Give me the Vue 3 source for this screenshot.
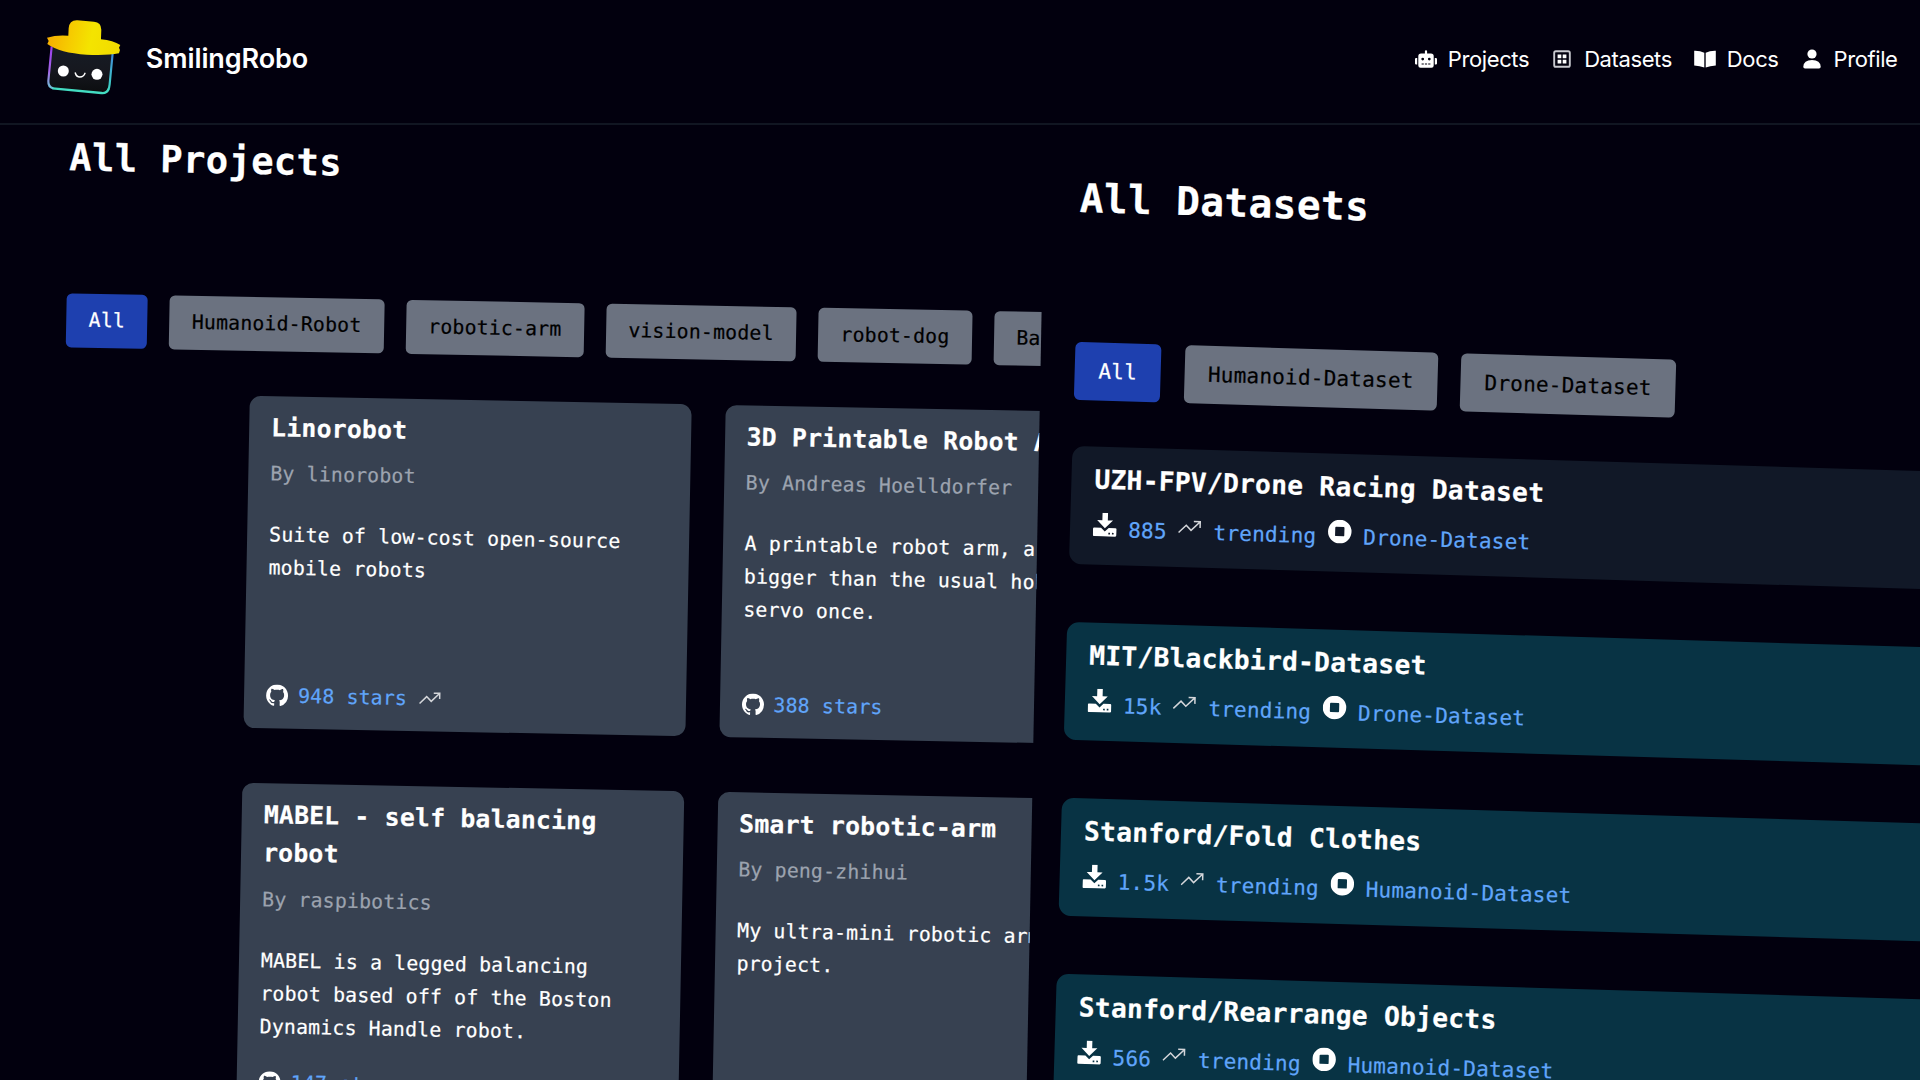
<script setup>
const nav = [
  { label: 'Projects', icon: 'robot' },
  { label: 'Datasets', icon: 'grid' },
  { label: 'Docs', icon: 'book' },
  { label: 'Profile', icon: 'person' },
]

const projectTags = ['All', 'Humanoid-Robot', 'robotic-arm', 'vision-model', 'robot-dog', 'Balancing-Robot']
const datasetTags = ['All', 'Humanoid-Dataset', 'Drone-Dataset']

const projects = [
  { title: 'Linorobot', author: 'linorobot', text: 'Suite of low-cost open-source mobile robots', stars: 948, trending: true },
  { title: '3D Printable Robot Arm', author: 'Andreas Hoelldorfer', text: 'A printable robot arm, a bit bigger than the usual hobby servo once.', stars: 388, trending: false },
  { title: 'MABEL - self balancing robot', author: 'raspibotics', text: 'MABEL is a legged balancing robot based off of the Boston Dynamics Handle robot.', stars: 147, trending: false },
  { title: 'Smart robotic-arm', author: 'peng-zhihui', text: 'My ultra-mini robotic arm project.', stars: 120, trending: false },
]

const datasets = [
  { name: 'UZH-FPV/Drone Racing Dataset', downloads: '885', tag: 'Drone-Dataset', tone: 'slate' },
  { name: 'MIT/Blackbird-Dataset', downloads: '15k', tag: 'Drone-Dataset', tone: 'teal' },
  { name: 'Stanford/Fold Clothes', downloads: '1.5k', tag: 'Humanoid-Dataset', tone: 'teal' },
  { name: 'Stanford/Rearrange Objects', downloads: '566', tag: 'Humanoid-Dataset', tone: 'teal' },
]
</script>

<template>
  <div class="page">
    <header class="header">
      <a class="brand">
        <svg class="logo" viewBox="138 56 226 230">
          <defs>
            <linearGradient id="side" x1="0" y1="0" x2="0" y2="1">
              <stop offset="0" stop-color="#3f86d8" />
              <stop offset="1" stop-color="#3fd8c4" />
            </linearGradient>
            <linearGradient id="left" x1="0" y1="0" x2="0" y2="1">
              <stop offset="0" stop-color="#9a3cf0" />
              <stop offset="0.6" stop-color="#a468e6" />
              <stop offset="1" stop-color="#6fc4d8" />
            </linearGradient>
            <linearGradient id="skin" x1="0" y1="0" x2="0" y2="1">
              <stop offset="0" stop-color="#161c26" />
              <stop offset="0.5" stop-color="#16181f" />
              <stop offset="1" stop-color="#0c0d0f" />
            </linearGradient>
            <linearGradient id="hat" x1="0" y1="0" x2="1" y2="0.1">
              <stop offset="0" stop-color="#f5a800" />
              <stop offset="0.35" stop-color="#f6ca00" />
              <stop offset="0.65" stop-color="#f4e400" />
              <stop offset="1" stop-color="#f2dc00" />
            </linearGradient>
          </defs>
          <path d="M154 138 145 242Q144 263 166 265L304 278Q325 280 328 258L339 158Z" fill="url(#skin)" />
          <path d="M155 138 145 242Q144 260 160 264" fill="none" stroke="url(#left)" stroke-width="6.5" />
          <path d="M158 264 304 278Q320 280 326 266" fill="none" stroke="#43dcc2" stroke-width="7" />
          <path d="M325 268Q328 262 329 252L338 160" fill="none" stroke="url(#side)" stroke-width="6.5" />
          <path d="M141 112Q170 103 205 106L206 84Q208 59 232 60L282 64Q304 66 304 88L303 117Q340 121 361 134L357 142 360 149 357 159Q320 166 260 163 180 158 142 131L146 122Z" fill="url(#hat)" />
          <circle cx="190" cy="212" r="16.5" fill="#fff" />
          <circle cx="291" cy="222" r="16.5" fill="#fff" />
          <path d="M226 218Q229 230 240 230 251 230 255 219" fill="none" stroke="#fff" stroke-width="4.5" stroke-linecap="round" />
        </svg>
        <span class="brand-name">SmilingRobo</span>
      </a>
      <nav class="nav">
        <a v-for="item in nav" :key="item.label" class="nav-link">
          <svg v-if="item.icon === 'robot'" class="nav-icon" viewBox="0 0 640 512">
            <path fill="currentColor" d="M32,224H64V416H32A32,32,0,0,1,0,384V256A32,32,0,0,1,32,224Zm512-48V448a64,64,0,0,1-64,64H160a64,64,0,0,1-64-64V176a80,80,0,0,1,80-80H288V32a32,32,0,0,1,64,0V96H464A80,80,0,0,1,544,176ZM264,256a40,40,0,1,0-40,40A40,40,0,0,0,264,256Zm-8,128H192v32h64Zm96,0H288v32h64ZM456,256a40,40,0,1,0-40,40A40,40,0,0,0,456,256Zm-8,128H384v32h64ZM640,256V384a32,32,0,0,1-32,32H576V224h32A32,32,0,0,1,640,256Z" />
          </svg>
          <svg v-else-if="item.icon === 'grid'" class="nav-icon" viewBox="0 0 22 22">
            <rect x="3.2" y="3.2" width="15.6" height="15.6" rx="1.6" fill="none" stroke="#c9c9cf" stroke-width="1.9" />
            <path fill="#fff" d="M6.6 6.4h3.7v3.9H6.6zM11.7 6.4h3.7v3.9h-3.7zM6.6 11.7h3.7v3.9H6.6zM11.7 11.7h3.7v3.9h-3.7z" />
          </svg>
          <svg v-else-if="item.icon === 'book'" class="nav-icon" viewBox="0 0 22 22">
            <path fill="currentColor" d="M.2 2.8Q6 2.6 10.3 4.7V19.6Q6 17.8.2 17.5ZM21.8 2.8Q16 2.6 11.7 4.7V19.6Q16 17.8 21.8 17.5Z" />
          </svg>
          <svg v-else class="nav-icon" viewBox="0 0 22 22">
            <circle cx="11" cy="6" r="4.6" fill="currentColor" />
            <path fill="currentColor" d="M2.3 18.8Q2.6 12.3 11 12.1 19.4 12.3 19.7 18.8 19.7 20.5 18 20.5H4Q2.3 20.5 2.3 18.8Z" />
          </svg>
          <span>{{ item.label }}</span>
        </a>
      </nav>
    </header>

    <main class="boards">
      <section class="board projects">
        <h1 class="heading">All Projects</h1>
        <div class="tags">
          <button v-for="(tag, i) in projectTags" :key="tag" class="tag" :class="{ active: i === 0 }">{{ tag }}</button>
        </div>
        <div class="cards">
          <article v-for="p in projects" :key="p.title" class="card">
            <h2 class="title">{{ p.title }}</h2>
            <p class="author">By {{ p.author }}</p>
            <p class="about">{{ p.text }}</p>
            <div class="stars">
              <svg class="github" viewBox="0 0 16 16">
                <path fill="currentColor" d="M8 0C3.58 0 0 3.58 0 8c0 3.54 2.29 6.53 5.47 7.59.4.07.55-.17.55-.38 0-.19-.01-.82-.01-1.49-2.01.37-2.53-.49-2.69-.94-.09-.23-.48-.94-.82-1.13-.28-.15-.68-.52-.01-.53.63-.01 1.08.58 1.23.82.72 1.21 1.87.87 2.33.66.07-.52.28-.87.51-1.07-1.78-.2-3.64-.89-3.64-3.95 0-.87.31-1.59.82-2.15-.08-.2-.36-1.02.08-2.12 0 0 .67-.21 2.2.82.64-.18 1.32-.27 2-.27s1.36.09 2 .27c1.53-1.04 2.2-.82 2.2-.82.44 1.1.16 1.92.08 2.12.51.56.82 1.27.82 2.15 0 3.07-1.87 3.75-3.65 3.95.29.25.54.73.54 1.48 0 1.07-.01 1.93-.01 2.2 0 .21.15.46.55.38A8.01 8.01 0 0 0 16 8c0-4.42-3.58-8-8-8Z" />
              </svg>
              <a class="link">{{ p.stars }} stars</a>
              <svg v-if="p.trending" class="trend" viewBox="0 0 22 22">
                <path fill="none" stroke="currentColor" stroke-width="1.5" d="M.6 16.3 7.6 9.3 12.2 14 20.4 5.9M14.6 5.7H20.6V11.5" />
              </svg>
            </div>
          </article>
        </div>
      </section>

      <section class="board datasets">
        <h1 class="heading">All Datasets</h1>
        <div class="tags">
          <button v-for="(tag, i) in datasetTags" :key="tag" class="tag" :class="{ active: i === 0 }">{{ tag }}</button>
        </div>
        <div class="rows">
          <article v-for="d in datasets" :key="d.name" class="row" :class="d.tone">
            <h2 class="title">{{ d.name }}</h2>
            <div class="meta">
              <svg class="icon" viewBox="0 0 24 24">
                <path fill="currentColor" d="M9.3 0h5.6v7.6h5.3L12.1 15.8 4 7.6h5.3Z" />
                <path fill="currentColor" fill-rule="evenodd" d="M1.2 15.3H8.2L12.1 19 16 15.3H22.8Q24 15.3 24 16.5V22.8Q24 24 22.8 24H1.2Q0 24 0 22.8V16.5Q0 15.3 1.2 15.3ZM15.8 20.2V21.9H17.5V20.2ZM19.5 20.2V21.9H21.2V20.2Z" />
              </svg>
              <a class="link">{{ d.downloads }}</a>
              <svg class="icon trend" viewBox="0 0 22 22">
                <path fill="none" stroke="currentColor" stroke-width="1.4" d="M.6 16.3 7.6 9.3 12.2 14 20.4 5.9M14.6 5.7H20.6V11.5" />
              </svg>
              <a class="link">trending</a>
              <svg class="icon stop" viewBox="0 0 24 24">
                <path fill="currentColor" fill-rule="evenodd" d="M12 0a12 12 0 1 1 0 24 12 12 0 0 1 0-24ZM8.2 7.3Q7.3 7.3 7.3 8.2V15.8Q7.3 16.7 8.2 16.7H15.8Q16.7 16.7 16.7 15.8V8.2Q16.7 7.3 15.8 7.3Z" />
              </svg>
              <a class="link">{{ d.tag }}</a>
            </div>
          </article>
        </div>
      </section>
    </main>
  </div>
</template>

<style>
body {
  margin: 0;
  background: #02000e;
}
</style>

<style scoped>
.page {
  width: 1920px;
  height: 1080px;
  overflow: hidden;
  background: #02000e;
  color: #fff;
  font-family: Inter, "Liberation Sans", sans-serif;
}

.header {
  box-sizing: border-box;
  height: 125px;
  padding: 0 22.5px 0 46px;
  border-bottom: 2px solid #111622;
  display: flex;
  justify-content: space-between;
  align-items: flex-start;
}

.brand {
  display: flex;
  align-items: center;
  gap: 24.5px;
  padding-top: 18.5px;
}

.logo {
  width: 75.3px;
  height: 76.7px;
}

.brand-name {
  font-size: 27px;
  font-weight: 600;
  line-height: 40px;
  letter-spacing: -0.1px;
  padding-top: 5px;
}

.nav {
  display: flex;
  gap: 22px;
  padding-top: 42.5px;
}

.nav-link {
  display: flex;
  align-items: center;
  gap: 11px;
  font-size: 22px;
  line-height: 33px;
  letter-spacing: -0.4px;
}

.nav-icon {
  width: 22px;
  height: 22px;
}

.boards {
  display: flex;
  height: 955px;
}

/* Sizes shared by both boards are multiples of the board's own unit, --u */
.board {
  flex: none;
  transform-origin: 0 0;
  font-family: "DejaVu Sans Mono", monospace;
  font-size: calc(14.45 * var(--u));
  line-height: calc(24 * var(--u));
  letter-spacing: 0.008em;
  -webkit-text-stroke: 0.2px currentColor;
}

.projects {
  --u: 1.375px;
  box-sizing: border-box;
  width: 1045px;
  height: 1060px;
  margin-top: -1px;
  padding-left: 70px;
  overflow: hidden;
  transform: rotate(1.1deg);
}

.datasets {
  --u: 1.46px;
  width: 1000px;
  height: 1060px;
  margin: -1px 0 0 37px;
  transform: rotate(1.7deg);
}

.heading {
  margin: 0;
  font-size: calc(27.1 * var(--u));
  line-height: calc(36 * var(--u));
  letter-spacing: 0.008em;
  font-weight: 700;
}

.projects .heading {
  padding: 8px 0 110px;
}

.datasets .heading {
  padding: 48px 0 117px;
}

.tags {
  display: flex;
  gap: calc(16 * var(--u));
}

.tag {
  flex: none;
  border: 0;
  border-radius: calc(4 * var(--u));
  padding: calc(7.7 * var(--u)) calc(16.3 * var(--u)) calc(8.3 * var(--u));
  background: #6b7280;
  color: #000;
  font: inherit;
  letter-spacing: inherit;
}

.tag.active {
  background: #1e40af;
  color: #fff;
}

.cards {
  display: grid;
  grid-template-columns: 442px 442px;
  grid-auto-rows: 332px;
  gap: 55px 33.5px;
  margin: 45px 0 0 185px;
}

.card {
  box-sizing: border-box;
  display: flex;
  flex-direction: column;
  padding: 12.5px 22px 16.5px;
  border-radius: 11px;
  background: #374151;
}

.title {
  margin: 0;
  font-size: calc(18.05 * var(--u));
  line-height: calc(28 * var(--u));
  letter-spacing: 0.008em;
  font-weight: 700;
}

.author {
  margin: 10px 0 28px;
  color: #9ca3af;
}

.about {
  margin: 0;
}

.stars {
  display: flex;
  align-items: center;
  margin-top: auto;
}

.github {
  width: 22px;
  height: 22px;
  margin-right: 10px;
}

.stars .trend {
  width: 22px;
  height: 22px;
  margin-left: 11.5px;
}

.trend {
  color: #d4d6da;
}

.link {
  color: #60a5fa;
}

.rows {
  display: flex;
  flex-direction: column;
  gap: 58.5px;
  margin-top: 46.5px;
}

.row {
  box-sizing: border-box;
  height: 117.4px;
  padding: 13px 23px 0;
  border-radius: 12px;
}

.slate {
  background: #111827;
}

.teal {
  background: #083344;
}

.meta {
  display: flex;
  align-items: baseline;
  gap: 11.7px;
  margin-top: 10.5px;
  white-space: nowrap;
}

.icon {
  width: 23.5px;
  height: 23.5px;
  margin-bottom: 1px;
}

.stop {
  margin-bottom: -3.5px;
}
</style>
